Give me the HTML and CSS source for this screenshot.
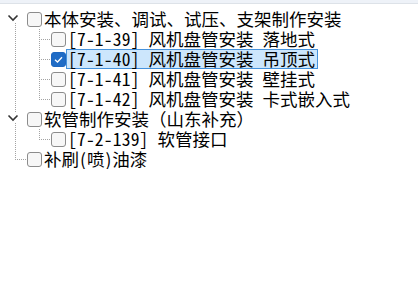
FILE: index.html
```html
<!DOCTYPE html>
<html lang="zh-CN">
<head>
    <meta charset="UTF-8">
    <meta name="viewport" content="width=device-width, initial-scale=1.0">
    <title>定额树</title>
    <link rel="stylesheet" href="styles.css">
</head>
<body>

    <div class="header"></div>

    <ul class="tree">
        <li class="row">
            <span class="guide toggle first">
                <svg width="24" height="20" viewBox="0 0 24 20"><polyline points="5.5,6.5 10,11 14.5,6.5" fill="none" stroke="#333" stroke-width="1.6"/></svg>
            </span>
            <span class="check"></span>
            <span class="label">本体安装、调试、试压、支架制作安装</span>
        </li>
        <li class="row">
            <span class="guide pipe"></span>
            <span class="guide tee"></span>
            <span class="check"></span>
            <span class="label"><span class="code">[7-1-39] </span>风机盘管安装<span class="code"> </span>落地式</span>
        </li>
        <li class="row">
            <span class="guide pipe"></span>
            <span class="guide tee"></span>
            <span class="check checked">
                <svg width="13" height="13" viewBox="0 0 13 13"><polyline points="3,6.8 5.5,9 10,4.2" fill="none" stroke="#fff" stroke-width="1.3"/></svg>
            </span>
            <span class="label selected"><span class="code">[7-1-40] </span>风机盘管安装<span class="code"> </span>吊顶式</span>
        </li>
        <li class="row">
            <span class="guide pipe"></span>
            <span class="guide tee"></span>
            <span class="check"></span>
            <span class="label"><span class="code">[7-1-41] </span>风机盘管安装<span class="code"> </span>壁挂式</span>
        </li>
        <li class="row">
            <span class="guide pipe"></span>
            <span class="guide elbow"></span>
            <span class="check"></span>
            <span class="label"><span class="code">[7-1-42] </span>风机盘管安装<span class="code"> </span>卡式嵌入式</span>
        </li>
        <li class="row">
            <span class="guide toggle middle">
                <svg width="24" height="20" viewBox="0 0 24 20"><polyline points="5.5,6.5 10,11 14.5,6.5" fill="none" stroke="#333" stroke-width="1.6"/></svg>
            </span>
            <span class="check"></span>
            <span class="label">软管制作安装（山东补充）</span>
        </li>
        <li class="row">
            <span class="guide pipe"></span>
            <span class="guide elbow"></span>
            <span class="check"></span>
            <span class="label"><span class="code">[7-2-139] </span>软管接口</span>
        </li>
        <li class="row">
            <span class="guide elbow"></span>
            <span class="check"></span>
            <span class="label">补刷<span class="paren">(</span>喷<span class="paren">)</span>油漆</span>
        </li>
    </ul>

</body>
</html>
```

FILE: styles.css
```css
body {
    margin: 0;
    background: #fff;
    font-family: "Noto Sans CJK SC", "Noto Sans", sans-serif;
    color: #000;
}

.header {
    height: 3px;
    background-color: #eef2f8;
    border-bottom: 1px solid #dde2e8;
}

.tree {
    list-style: none;
    margin: 0;
    padding: 5px 0 0 3px;
}

.row {
    display: flex;
    align-items: center;
    height: 20px;
}

/* tree connector cells, dotted lines drawn as backgrounds */
.guide {
    flex: none;
    width: 24px;
    height: 20px;
    background-repeat: no-repeat;
    --vdots: repeating-linear-gradient(to bottom, #a3a3a3 0 1px, transparent 1px 2px);
    --hdots: repeating-linear-gradient(to right, #a3a3a3 0 1px, transparent 1px 2px);
}
.guide svg {
    display: block;
}
.pipe {
    background-image: var(--vdots);
    background-size: 1px 20px;
    background-position: 12px 0;
}
.tee {
    background-image: var(--vdots), var(--hdots);
    background-size: 1px 20px, 12px 1px;
    background-position: 12px 0, 12px 10px;
}
.elbow {
    background-image: var(--vdots), var(--hdots);
    background-size: 1px 11px, 12px 1px;
    background-position: 12px 0, 12px 10px;
}
.toggle.first {
    background-image: var(--vdots);
    background-size: 1px 6px;
    background-position: 12px 14px;
}
.toggle.middle {
    background-image: var(--vdots), var(--vdots);
    background-size: 1px 4px, 1px 6px;
    background-position: 12px 0, 12px 14px;
}

.check {
    flex: none;
    box-sizing: border-box;
    width: 15px;
    height: 15px;
    border: 1px solid #8c8c8c;
    border-radius: 3px;
    background: #f7f7f7;
}
.check.checked {
    border-color: #1d67c0;
    background: #1f6cc6;
    display: flex;
    align-items: center;
    justify-content: center;
}
.check.checked svg {
    display: block;
}

.label {
    box-sizing: border-box;
    height: 20px;
    line-height: 18px;
    padding: 0 2px 0 1px;
    border: 1px solid transparent;
    font-size: 17.5px;
    white-space: pre;
}
.label.selected {
    background-color: #cce6fc;
    border-color: #4592dc;
}
.code {
    font-feature-settings: "hwid";
    letter-spacing: 0.2px;
}
.paren {
    padding: 0 1px;
}
```
